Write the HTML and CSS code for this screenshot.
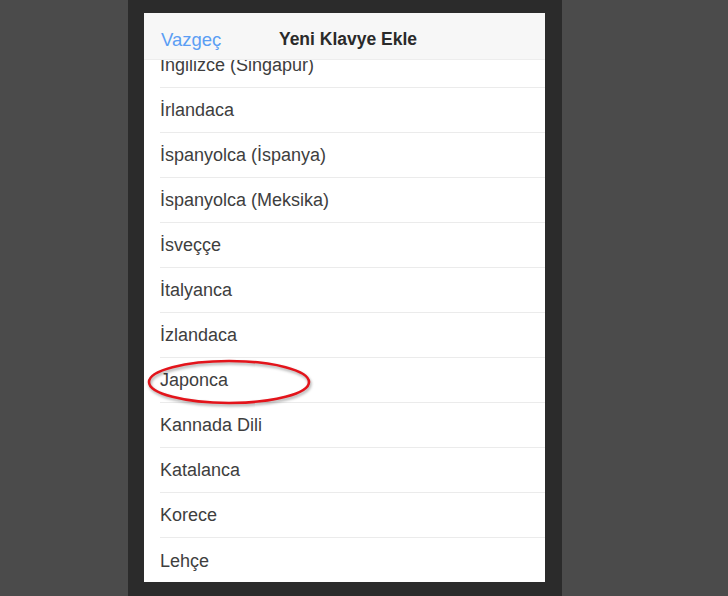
FILE: index.html
```html
<!DOCTYPE html>
<html lang="tr">
<head>
<meta charset="utf-8">
<title>Yeni Klavye Ekle</title>
<link rel="stylesheet" href="styles.css">
</head>
<body>
<div class="stage">
  <div class="panel">
    <div class="screen">
      <header class="navbar">
        <span class="cancel">Vazgeç</span>
        <span class="title">Yeni Klavye Ekle</span>
        <span></span>
      </header>
      <div class="viewport">
        <ul class="list">
          <li class="row">İngilizce (Singapur)</li>
          <li class="row">İrlandaca</li>
          <li class="row">İspanyolca (İspanya)</li>
          <li class="row">İspanyolca (Meksika)</li>
          <li class="row">İsveççe</li>
          <li class="row">İtalyanca</li>
          <li class="row">İzlandaca</li>
          <li class="row highlight">Japonca
            <svg class="ring" width="166" height="50" viewBox="0 0 166 50">
              <ellipse cx="82" cy="24" rx="80" ry="21" fill="none" stroke="#e3141b" stroke-width="2.6"/>
            </svg>
          </li>
          <li class="row">Kannada Dili</li>
          <li class="row">Katalanca</li>
          <li class="row">Korece</li>
          <li class="row">Lehçe</li>
        </ul>
      </div>
    </div>
  </div>
</div>
</body>
</html>
```

FILE: styles.css
```css
* { box-sizing: border-box; }
html, body {
  margin: 0;
  padding: 0;
  background: #4b4b4b;
  font-family: "Liberation Sans", Arial, sans-serif;
}
.stage {
  height: 596px;
  display: flex;
  padding-left: 128px;
}
.panel {
  width: 434px;
  height: 596px;
  background: #2b2b2b;
  padding: 13px 17px 14px 16px;
  display: flex;
}
.screen {
  flex: 1;
  background: #ffffff;
  display: flex;
  flex-direction: column;
  overflow: hidden;
}
.navbar {
  height: 47px;
  flex: none;
  background: #f7f7f7;
  border-bottom: 1px solid #ededed;
  display: grid;
  grid-template-columns: 1fr auto 1fr;
  align-items: center;
  padding: 7px 17px 0 17px;
}
.cancel {
  color: #5b9ef4;
  font-size: 18.5px;
  justify-self: start;
}
.title {
  color: #2a2a2a;
  font-size: 17.5px;
  font-weight: bold;
  padding-left: 7px;
}
.viewport {
  flex: 1;
  overflow: hidden;
}
.list {
  list-style: none;
  margin: -17px 0 0 0;
  padding: 0;
}
.row {
  position: relative;
  height: 45px;
  margin-left: 16px;
  border-bottom: 1px solid #ebebeb;
  display: flex;
  align-items: center;
  font-size: 18px;
  color: #3e3e3e;
  padding-top: 1px;
}
.row:last-child { border-bottom: none; }
.ring {
  position: absolute;
  left: -13px;
  top: 0;
  filter: drop-shadow(1px 2px 1.5px rgba(0,0,0,0.35));
}
```
